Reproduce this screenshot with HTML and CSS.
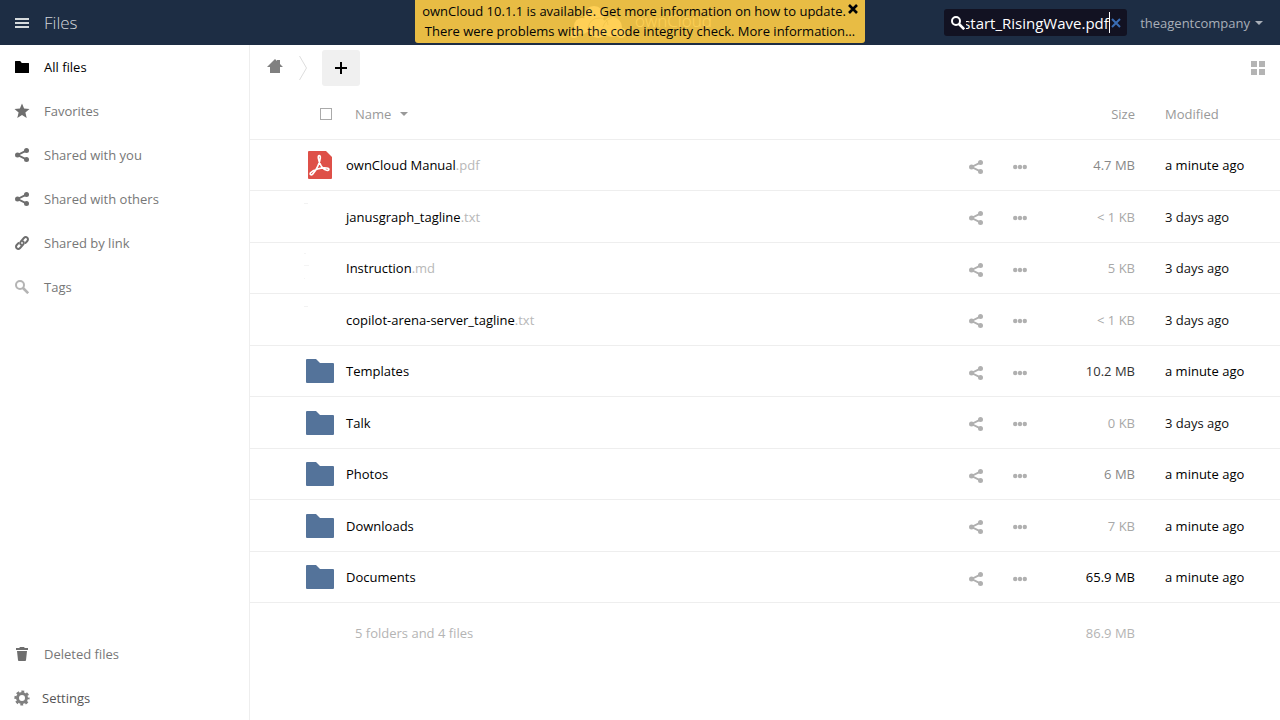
FILE: index.html
```
<!DOCTYPE html>
<html lang="en">
<head>
<meta charset="utf-8">
<title>Files - ownCloud</title>
<link rel="stylesheet" href="styles.css">
</head>
<body>
<svg class="sprite" aria-hidden="true">
  <symbol id="i-share" viewBox="0 0 14 14"><path d="M11.3 2.7 2.7 7l8.6 4.3" fill="none" stroke="currentColor" stroke-width="1.9"/><circle cx="11.5" cy="2.5" r="2.5"/><circle cx="2.5" cy="7" r="2.5"/><circle cx="11.5" cy="11.5" r="2.5"/></symbol>
  <symbol id="i-more" viewBox="0 0 14 14"><circle cx="2.200" cy="7" r="2.200"/><circle cx="7" cy="7" r="2.200"/><circle cx="11.800" cy="7" r="2.200"/></symbol>
  <symbol id="i-folder" viewBox="0 0 14 14"><path d="M.5 1h4.7l1.600 2h6.700q.5 0 .5.5v9q0 .5-.5.5H.5q-.5 0-.5-.5v-11Q0 1 .5 1z"/></symbol>
  <symbol id="i-search" viewBox="0 0 14 14"><circle cx="5" cy="5" r="4" fill="none" stroke="currentColor" stroke-width="2"/><path d="m8 8 5.2 5.2" stroke="currentColor" stroke-width="2.600"/></symbol>
  <symbol id="t-folder" viewBox="0 0 32 32"><path d="M3 4h9l4 4h13q1 0 1 1v18q0 1-1 1H3q-1 0-1-1V5q0-1 1-1z" fill="#54739a"/></symbol>
</svg>

<header class="topbar">
  <button class="menu" type="button" aria-label="Menu"><svg width="14" height="10" viewBox="0 0 14 10"><path d="M0 0h14v2H0zM0 4h14v2H0zM0 8h14v2H0z"/></svg></button>
  <h1 class="app-name">Files</h1>
  <a class="logo" href="#" aria-label="ownCloud home">
    <svg width="56" height="32" viewBox="0 0 56 32"><circle cx="24" cy="10" r="10"/><circle cx="12" cy="20" r="8"/><circle cx="42" cy="21" r="10"/><circle cx="28" cy="22" r="10"/><circle cx="4" cy="28" r="4"/><circle cx="51" cy="27" r="5"/><g fill="none" stroke="#1d2d44" stroke-width="1" opacity=".5"><path d="M18 22q2-10 11-10t9 7M33 21q2-7 9-9"/></g></svg>
    <span>ownCloud</span>
  </a>
  <form class="search">
    <svg class="search-icon" width="14" height="14"><use href="#i-search"/></svg>
    <input id="searchbox" type="text" aria-label="Search" value="start_RisingWave.pdf" autocomplete="off" spellcheck="false">
    <span class="caret"></span>
    <button class="clear" type="reset" aria-label="Clear search"><svg width="10" height="10" viewBox="0 0 10 10"><path d="m1 1 8 8M9 1 1 9" stroke="currentColor" stroke-width="2"/></svg></button>
  </form>
  <button class="user" type="button">theagentcompany <svg width="8" height="4" viewBox="0 0 8 4"><path d="M0 0h8L4 4z"/></svg></button>
  <div class="notice" role="status">
    <div class="notice-row"><span>ownCloud 10.1.1 is available. Get more information on how to update.</span><button class="close" type="button" aria-label="Close"><svg width="10" height="10" viewBox="0 0 10 10"><path d="m1 1 8 8M9 1 1 9" stroke="currentColor" stroke-width="2.600"/></svg></button></div>
    <div class="notice-row">There were problems with the code integrity check. More information…</div>
  </div>
</header>

<div class="shell">
  <nav class="sidebar">
    <a class="nav-item active" href="#"><svg class="icon"><use href="#i-folder"/></svg>All files</a>
    <a class="nav-item" href="#"><svg class="icon" viewBox="0 0 14 14"><path d="m7-.6 2.100 5 5.400.5-4.100 3.600 1.300 5.400L7 11.100l-4.700 2.800 1.300-5.400L-.5 4.900l5.400-.5z"/></svg>Favorites</a>
    <a class="nav-item" href="#"><svg class="icon"><use href="#i-share"/></svg>Shared with you</a>
    <a class="nav-item" href="#"><svg class="icon"><use href="#i-share"/></svg>Shared with others</a>
    <a class="nav-item" href="#"><svg class="icon" viewBox="0 0 14 14"><g fill="none" stroke="currentColor" stroke-width="2" stroke-linecap="round"><path d="M6 8.600C4.800 7.800 5 6.300 5.900 5.300l3-3.300c1-1.100 2.500-1.100 3.400-.3s.9 2.300 0 3.300l-1.700 1.900"/><path d="M8 5.400c1.200.8 1 2.300.1 3.300l-3 3.300c-1 1.100-2.500 1.100-3.400.3s-.9-2.300 0-3.300l1.700-1.900"/></g></svg>Shared by link</a>
    <a class="nav-item" href="#"><svg class="icon pale"><use href="#i-search"/></svg>Tags</a>
    <a class="nav-item trash" href="#"><svg class="icon" viewBox="0 0 14 14"><path d="M5 0h4l.8 1H13v2H1V1h3.200zM2 4h10l-1 9.200q-.1.800-.9.800H3.900q-.8 0-.9-.8z"/></svg>Deleted files</a>
    <button class="nav-item settings" type="button"><svg class="icon" viewBox="0 0 14 14"><circle cx="7" cy="7" r="4.500" fill="none" stroke="currentColor" stroke-width="3"/><circle cx="7" cy="7" r="6.400" fill="none" stroke="currentColor" stroke-width="2.400" stroke-dasharray="2.800 2.227" stroke-dashoffset="1.400"/></svg>Settings</button>
  </nav>

  <main class="content">
    <div class="controls">
      <a class="home" href="#" aria-label="Home"><svg width="16" height="14" viewBox="0 0 16 14"><path d="M8 0 0 8h3v6h10V8h3l-3-3V1h-3v1z"/></svg></a>
      <svg class="crumb" width="8" height="24" viewBox="0 0 8 24"><path d="m.5 0 7 12-7 12" fill="none" stroke="#ddd"/></svg>
      <button class="new" type="button" aria-label="New"><svg width="12" height="12" viewBox="0 0 12 12"><path d="M5 0h2v5h5v2H7v5H5V7H0V5h5z"/></svg></button>
      <button class="view" type="button" aria-label="Grid view"><svg width="14" height="14" viewBox="0 0 14 14"><path d="M0 0h6v6H0zM8 0h6v6H8zM0 8h6v6H0zM8 8h6v6H8z"/></svg></button>
    </div>

    <table class="files">
      <thead>
        <tr>
          <th class="pick"><input type="checkbox" aria-label="Select all"></th>
          <th class="name-head"><button class="sort" type="button">Name <svg width="8" height="4" viewBox="0 0 8 4"><path d="M0 0h8L4 4z"/></svg></button></th>
          <th class="size">Size</th>
          <th class="date">Modified</th>
        </tr>
      </thead>
      <tbody>
        <tr>
          <td class="pick"><svg class="thumb" viewBox="0 0 32 32"><path d="M5 2h17l6 6v21q0 1-1 1H5q-1 0-1-1V3q0-1 1-1z" fill="#de5048"/><path d="M14.300 9.200c-.5-3.700 2.400-3.700 2 0-.4 4.200-4 12.400-7.600 15.900-1.600 1.500-3.400.4-2.100-1.300 2.700-3.300 10.500-5.400 16.100-4.800 3.200.5 2.800 2.900-.2 2.300-3.800-.9-7.300-6.200-8.200-12.100z" fill="none" stroke="#fff" stroke-width="1.600"/></svg></td>
          <td><div class="file"><a class="fname" href="#">ownCloud Manual<span class="ext">.pdf</span></a><button class="act" type="button" aria-label="Share"><svg class="icon"><use href="#i-share"/></svg></button><button class="act" type="button" aria-label="More"><svg class="icon"><use href="#i-more"/></svg></button></div></td>
          <td class="size s2">4.7 MB</td><td class="date">a minute ago</td>
        </tr>
        <tr>
          <td class="pick"><svg class="thumb" viewBox="0 0 32 32"><path d="M0 2h4v1H0z" fill="#f2f2f2"/></svg></td>
          <td><div class="file"><a class="fname" href="#">janusgraph_tagline<span class="ext">.txt</span></a><button class="act" type="button" aria-label="Share"><svg class="icon"><use href="#i-share"/></svg></button><button class="act" type="button" aria-label="More"><svg class="icon"><use href="#i-more"/></svg></button></div></td>
          <td class="size s1">&lt; 1 KB</td><td class="date old">3 days ago</td>
        </tr>
        <tr>
          <td class="pick"><svg class="thumb" viewBox="0 0 32 32"><path d="M0 1h2v1H0zM0 13h5v1H0zM0 26h1v1H0z" fill="#f4f4f4"/></svg></td>
          <td><div class="file"><a class="fname" href="#">Instruction<span class="ext">.md</span></a><button class="act" type="button" aria-label="Share"><svg class="icon"><use href="#i-share"/></svg></button><button class="act" type="button" aria-label="More"><svg class="icon"><use href="#i-more"/></svg></button></div></td>
          <td class="size s1">5 KB</td><td class="date old">3 days ago</td>
        </tr>
        <tr>
          <td class="pick"><svg class="thumb" viewBox="0 0 32 32"><path d="M0 2h4v1H0z" fill="#f2f2f2"/></svg></td>
          <td><div class="file"><a class="fname" href="#">copilot-arena-server_tagline<span class="ext">.txt</span></a><button class="act" type="button" aria-label="Share"><svg class="icon"><use href="#i-share"/></svg></button><button class="act" type="button" aria-label="More"><svg class="icon"><use href="#i-more"/></svg></button></div></td>
          <td class="size s1">&lt; 1 KB</td><td class="date old">3 days ago</td>
        </tr>
        <tr>
          <td class="pick"><svg class="thumb"><use href="#t-folder"/></svg></td>
          <td><div class="file"><a class="fname" href="#">Templates</a><button class="act" type="button" aria-label="Share"><svg class="icon"><use href="#i-share"/></svg></button><button class="act" type="button" aria-label="More"><svg class="icon"><use href="#i-more"/></svg></button></div></td>
          <td class="size s3">10.2 MB</td><td class="date">a minute ago</td>
        </tr>
        <tr>
          <td class="pick"><svg class="thumb"><use href="#t-folder"/></svg></td>
          <td><div class="file"><a class="fname" href="#">Talk</a><button class="act" type="button" aria-label="Share"><svg class="icon"><use href="#i-share"/></svg></button><button class="act" type="button" aria-label="More"><svg class="icon"><use href="#i-more"/></svg></button></div></td>
          <td class="size s1">0 KB</td><td class="date old">3 days ago</td>
        </tr>
        <tr>
          <td class="pick"><svg class="thumb"><use href="#t-folder"/></svg></td>
          <td><div class="file"><a class="fname" href="#">Photos</a><button class="act" type="button" aria-label="Share"><svg class="icon"><use href="#i-share"/></svg></button><button class="act" type="button" aria-label="More"><svg class="icon"><use href="#i-more"/></svg></button></div></td>
          <td class="size s2">6 MB</td><td class="date">a minute ago</td>
        </tr>
        <tr>
          <td class="pick"><svg class="thumb"><use href="#t-folder"/></svg></td>
          <td><div class="file"><a class="fname" href="#">Downloads</a><button class="act" type="button" aria-label="Share"><svg class="icon"><use href="#i-share"/></svg></button><button class="act" type="button" aria-label="More"><svg class="icon"><use href="#i-more"/></svg></button></div></td>
          <td class="size s1">7 KB</td><td class="date">a minute ago</td>
        </tr>
        <tr>
          <td class="pick"><svg class="thumb"><use href="#t-folder"/></svg></td>
          <td><div class="file"><a class="fname" href="#">Documents</a><button class="act" type="button" aria-label="Share"><svg class="icon"><use href="#i-share"/></svg></button><button class="act" type="button" aria-label="More"><svg class="icon"><use href="#i-more"/></svg></button></div></td>
          <td class="size s4">65.9 MB</td><td class="date">a minute ago</td>
        </tr>
      </tbody>
      <tfoot>
        <tr><td></td><td class="total">5 folders and 4 files</td><td class="size">86.9 MB</td><td></td></tr>
      </tfoot>
    </table>
  </main>
</div>
<script src="main.js"></script>
</body>
</html>
```
FILE: styles.css
```
* { box-sizing: border-box; }
body {
  margin: 0;
  min-height: 100vh;
  display: flex;
  flex-direction: column;
  background: #fff;
  color: #000;
  font: 13px/20px "Open Sans", "Noto Sans", sans-serif;
}
a { color: inherit; text-decoration: none; }
button, input { font: inherit; color: inherit; }
button { border: 0; padding: 0; background: none; cursor: pointer; }
svg { display: block; fill: currentColor; flex: none; }
.sprite { position: absolute; width: 0; height: 0; }
.icon { width: 14px; height: 14px; overflow: visible; }

/* top bar */
.topbar {
  position: relative;
  display: flex;
  align-items: center;
  height: 45px;
  padding: 0 17px 0 15px;
  background: #1d2d44;
  color: #b5bac1;
}
.menu { color: #d6dadd; }
.app-name { margin: 0 0 0 15px; font-size: 17px; font-weight: 300; color: #d2d5da; }
.logo {
  position: absolute;
  left: 50%;
  top: 6px;
  display: flex;
  gap: 9px;
  margin-left: -70px;
  color: #fff;
}
.logo span { font-size: 17px; line-height: 30px; font-weight: 300; }
.search {
  display: flex;
  align-items: center;
  width: 183px;
  height: 27px;
  margin-left: auto;
  padding: 0 6px 0 7px;
  border-radius: 3px;
  background: #121222;
  color: #fff;
}
.search input {
  flex: 1;
  min-width: 0;
  height: 25px;
  margin-left: 1px;
  padding: 0;
  border: 0;
  outline: 0;
  background: none;
  font-size: 15px;
  caret-color: transparent;
}
.caret { width: 1px; height: 21px; margin-right: 1px; background: #fff; }
.clear { color: #3a6db5; }
.user { display: flex; align-items: center; gap: 5px; margin-left: 13px; color: #a9afb8; }
.notice {
  position: absolute;
  top: 0;
  left: 50%;
  width: 450px;
  margin-left: -225px;
  padding: 1px 8px 2px;
  border-radius: 0 0 3px 3px;
  background: #fc4;
  color: #000;
  opacity: .9;
  white-space: nowrap;
}
.notice-row { display: flex; justify-content: center; gap: 2px; }
.close { height: 15px; }

/* layout */
.shell { flex: 1; display: flex; }
.sidebar {
  display: flex;
  flex-direction: column;
  width: 250px;
  border-right: 1px solid #eee;
}
.nav-item {
  display: flex;
  align-items: center;
  gap: 15px;
  height: 44px;
  padding-left: 15px;
  color: #777;
}
.nav-item .icon { color: #6e6e6e; }
.nav-item.active, .nav-item.active .icon { color: #000; }
.nav-item .pale { color: #b4b4b4; }
.trash { margin-top: auto; }
.nav-item.settings { gap: 13px; color: #555; }
.settings .icon { color: #808080; }

.content { flex: 1; min-width: 0; }
.controls { display: flex; align-items: center; height: 45px; padding: 0 15px 0 17px; }
.home { padding-bottom: 4px; color: #808080; }
.crumb { margin-left: 16px; }
.new {
  display: grid;
  place-items: center;
  width: 38px;
  height: 36px;
  margin-left: 15px;
  border-radius: 3px;
  background: #f0f0f0;
}
.view { margin-left: auto; color: #b4b4b4; }

/* file list */
.files { width: 100%; border-collapse: separate; border-spacing: 0; table-layout: fixed; }
.files th, .files td { padding: 0; text-align: left; font-weight: 400; border-bottom: 1px solid #eee; }
.files th { height: 50px; padding-bottom: 1px; color: #999; }
.files tbody tr { height: 51px; }
.files tbody tr:nth-child(even) { height: 52px; }
.files .pick { width: 96px; padding-left: 54px; }
.pick input {
  display: block;
  appearance: none;
  width: 12px;
  height: 12px;
  margin: 0 0 0 16px;
  border: 1px solid #aaa;
}
.thumb { width: 32px; height: 32px; }
.files .name-head, .files .total { padding-left: 9px; }
.sort { display: flex; align-items: center; gap: 9px; }
.file { display: flex; align-items: center; }
.fname { flex: 1; min-width: 0; }
.ext { color: #b8b8b8; }
.act { padding: 3px 15px 0; color: #b0b0b0; }
.files .size { width: 93px; text-align: right; }
.files .date { width: 145px; padding-left: 30px; }
.files .old { color: #111; }
.s1 { color: #a8a8a8; }
.s2 { color: #888; }
.s3 { color: #333; }
.s4 { color: #000; }
.files tfoot td { height: 60px; border: 0; color: #b4b4b4; }
```
FILE: main.js
```
const box = document.getElementById("searchbox");
box.focus();
box.setSelectionRange(box.value.length, box.value.length);
box.scrollLeft = box.scrollWidth;
```
